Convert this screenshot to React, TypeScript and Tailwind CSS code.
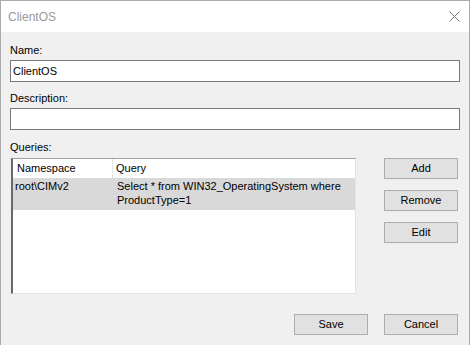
import React from 'react';

const font = { fontFamily: '"Liberation Sans", Arial, sans-serif' };

const WinButton = ({ label }: { label: string }) => (
  <button className="w-[74px] h-[21px] border border-[#adadad] bg-[#e1e1e1] text-[11px] leading-[19px] text-black text-center">
    {label}
  </button>
);

const Field = ({ label, value = '' }: { label: string; value?: string }) => (
  <div className="flex flex-col">
    <div className="h-[14px] leading-[14px] text-[11px] text-black">{label}</div>
    <div className="mt-[3px] h-[22px] w-[450px] border border-[#7a7a7a] bg-white px-[2px] text-[11px] leading-[20px] text-black">
      {value}
    </div>
  </div>
);

export default function App() {
  return (
    <div className="w-[470px] h-[345px] flex flex-col bg-[#f0f0f0] border-x border-t border-[#aaaaaa] overflow-hidden" style={font}>
      {/* Title bar */}
      <div className="h-[31px] bg-white flex items-center justify-between pl-[7px] pr-[9px]">
        <span className="text-[12px] text-[#999999] leading-[14px]">ClientOS</span>
        <svg width="11" height="11" viewBox="0 0 11 11">
          <path d="M0.5 0.5 L10.5 10.5 M10.5 0.5 L0.5 10.5" stroke="#777777" strokeWidth="1" />
        </svg>
      </div>

      {/* Body */}
      <div className="flex flex-col pl-[9px] pt-[11px]">
        <Field label="Name:" value="ClientOS" />
        <div className="mt-[9px]">
          <Field label="Description:" />
        </div>

        <div className="mt-[10px] h-[14px] leading-[14px] text-[11px] text-black">Queries:</div>

        <div className="mt-[4px] flex">
          {/* List view */}
          <div className="ml-[1px] w-[345px] h-[136px] bg-white border-t border-l-2 border-t-[#a0a0a0] border-l-[#696969] border-r border-b border-r-[#e3e3e3] border-b-[#e3e3e3] flex flex-col">
            <div className="h-[19px] flex text-[11px] leading-[18px] text-black">
              <div className="w-[100px] pl-[4px] border-r border-[#e5e5e5]">Namespace</div>
              <div className="pl-[3px]">Query</div>
            </div>
            <div className="h-[32px] bg-[#d9d9d9] flex text-[11px] leading-[14px] text-black pt-[1px] whitespace-nowrap">
              <div className="w-[100px] pl-[2px]">root\CIMv2</div>
              <div className="pl-[4px]">
                Select * from WIN32_OperatingSystem where
                <br />
                ProductType=1
              </div>
            </div>
          </div>

          {/* Side buttons */}
          <div className="ml-[28px] flex flex-col gap-[11px]">
            <WinButton label="Add" />
            <WinButton label="Remove" />
            <WinButton label="Edit" />
          </div>
        </div>

        <div className="mt-[20px] flex justify-end gap-[16px] pr-[11px]">
          <WinButton label="Save" />
          <WinButton label="Cancel" />
        </div>
      </div>
    </div>
  );
}
